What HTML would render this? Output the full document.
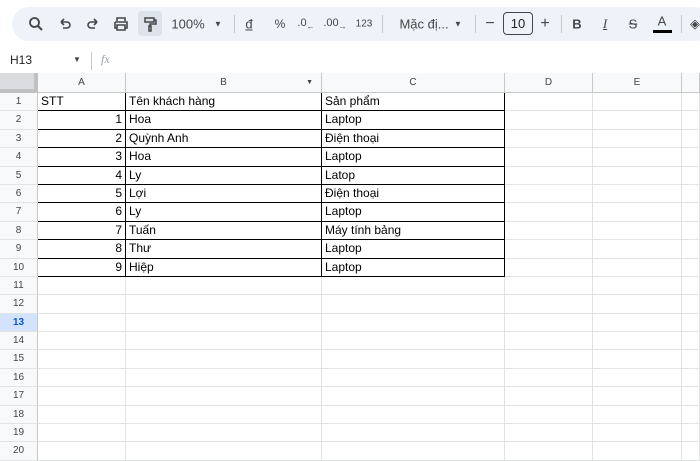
<!DOCTYPE html>
<html><head><meta charset="utf-8"><style>
*{box-sizing:border-box;margin:0;padding:0}
body{width:700px;height:454px;overflow:hidden;background:#fff;font-family:"Liberation Sans",Arial,sans-serif;position:relative;color:#000}
.tb{position:absolute;left:12px;top:7px;width:700px;height:34px;background:#eef2f9;border-radius:17px}
.i{position:absolute;top:24px;transform:translate(-50%,-50%);font-size:13px;color:#444746;white-space:nowrap}
.sep{position:absolute;top:15px;width:1px;height:18px;background:#c7c7c7}
.fb{position:absolute;top:50px;left:0;width:700px;height:22px}
.hdr{position:absolute;top:73px;left:0;height:20px;display:flex;width:700px;background:#f8f9fa}
.hdr div{border-right:1px solid #c7c7c7;border-bottom:1px solid #c7c7c7;font-size:10px;color:#444;text-align:center;line-height:19px;position:relative}
.g{position:absolute;top:93px;left:0;width:700px}
.r{display:flex;height:18.4px}
.r div{border-right:1px solid #e2e3e3;border-bottom:1px solid #e2e3e3;font-size:12px;line-height:17px;padding:0 3px;white-space:nowrap;overflow:hidden}
.r div:first-child{background:#f8f9fa;border-right:1px solid #c7c7c7;font-size:10px;color:#444;text-align:center;padding:0}
.r.d div:nth-child(2),.r.d div:nth-child(3),.r.d div:nth-child(4){border-bottom:1px solid #000}
.r.d div:nth-child(2),.r.d div:nth-child(3),.r.d div:nth-child(4){border-right:1px solid #000}
.n{text-align:right}
.c0{width:38px}.c1{width:88px}.c2{width:196px}.c3{width:183px}.c4{width:88px}.c5{width:89px}.c6{width:18px}
</style></head><body>
<div class="tb"></div>
<svg style="position:absolute;left:28px;top:16px" width="16" height="16" viewBox="0 0 16 16"><circle cx="6.5" cy="6.5" r="4.5" fill="none" stroke="#444746" stroke-width="1.8"/><path d="M10 10l4 4" stroke="#444746" stroke-width="2"/></svg>
<svg style="position:absolute;left:58px;top:17px" width="14" height="14" viewBox="0 0 14 14"><path d="M3 5h6a3 3 0 010 6H5M3 5l3-3M3 5l3 3" fill="none" stroke="#444746" stroke-width="1.6"/></svg>
<svg style="position:absolute;left:86px;top:17px" width="14" height="14" viewBox="0 0 14 14"><path d="M11 5H5a3 3 0 000 6h4M11 5L8 2M11 5L8 8" fill="none" stroke="#444746" stroke-width="1.6"/></svg>
<svg style="position:absolute;left:113px;top:16px" width="16" height="16" viewBox="0 0 16 16"><path d="M4 5V2h8v3M2 6h12v6h-2M4 12H2V6M4 9h8v5H4z" fill="none" stroke="#444746" stroke-width="1.6"/></svg>
<div style="position:absolute;left:138px;top:11px;width:24px;height:25px;background:#dde3ea;border-radius:4px"></div>
<svg style="position:absolute;left:143px;top:16px" width="14" height="16" viewBox="0 0 14 16"><path d="M2 2h9v4H2zM11 4h2v4H7v2M6 10h2v5H6z" fill="none" stroke="#444746" stroke-width="1.5"/></svg>
<div class="i" style="left:188px;font-size:13px">100%</div>
<div class="i" style="left:218px;font-size:8px">▼</div>
<div class="sep" style="left:234px"></div>
<div class="i" style="left:249px;text-decoration:underline">đ</div>
<div class="i" style="left:280px;font-size:12px">%</div>
<div class="i" style="left:306px;font-size:11px">.0<sub style="font-size:8px">←</sub></div>
<div class="i" style="left:335px;font-size:11px">.00<sub style="font-size:8px">→</sub></div>
<div class="i" style="left:364px;font-size:10px">123</div>
<div class="sep" style="left:382px"></div>
<div class="i" style="left:424px;font-size:13px">Mặc đị...</div>
<div class="i" style="left:458px;font-size:8px">▼</div>
<div class="sep" style="left:475px"></div>
<div class="i" style="left:490px;font-size:16px">−</div>
<div style="position:absolute;left:503px;top:12px;width:30px;height:23px;border:1px solid #444746;border-radius:4px;font-size:13px;text-align:center;line-height:21px;color:#222">10</div>
<div class="i" style="left:545px;font-size:16px">+</div>
<div class="sep" style="left:561px"></div>
<div class="i" style="left:577px;font-weight:bold">B</div>
<div class="i" style="left:605px;font-style:italic;font-family:'Liberation Serif',serif;text-decoration:underline">I</div>
<div class="i" style="left:633px;text-decoration:line-through">S</div>
<div class="i" style="left:662px;top:21px">A</div>
<div style="position:absolute;left:653px;top:30px;width:19px;height:3px;background:#000"></div>
<div class="sep" style="left:681px"></div>
<div class="i" style="left:695px">◈</div>
<div style="position:absolute;left:10px;top:53px;font-size:12px;color:#222">H13</div>
<div style="position:absolute;left:73px;top:55px;font-size:8px;color:#444">▼</div>
<div style="position:absolute;left:91px;top:52px;width:1px;height:18px;background:#c7c7c7"></div>
<div style="position:absolute;left:101px;top:52px;font-size:12px;font-style:italic;font-family:'Liberation Serif',serif;color:#9aa0a6">fx</div>
<div class="hdr"><div class="c0" style="background:#dadce0;border-right:4px solid #c0c0c0;border-bottom:4px solid #c0c0c0"></div><div class="c1">A</div><div class="c2">B<span style="position:absolute;right:8px;font-size:7px">▼</span></div><div class="c3">C</div><div class="c4">D</div><div class="c5">E</div><div class="c6"></div></div>
<div class="g">
<div class="r d"><div class="c0">1</div><div class="c1">STT</div><div class="c2">Tên khách hàng</div><div class="c3">Sản phẩm</div><div class="c4"></div><div class="c5"></div><div class="c6"></div></div>
<div class="r d"><div class="c0">2</div><div class="c1 n">1</div><div class="c2">Hoa</div><div class="c3">Laptop</div><div class="c4"></div><div class="c5"></div><div class="c6"></div></div>
<div class="r d"><div class="c0">3</div><div class="c1 n">2</div><div class="c2">Quỳnh Anh</div><div class="c3">Điện thoại</div><div class="c4"></div><div class="c5"></div><div class="c6"></div></div>
<div class="r d"><div class="c0">4</div><div class="c1 n">3</div><div class="c2">Hoa</div><div class="c3">Laptop</div><div class="c4"></div><div class="c5"></div><div class="c6"></div></div>
<div class="r d"><div class="c0">5</div><div class="c1 n">4</div><div class="c2">Ly</div><div class="c3">Latop</div><div class="c4"></div><div class="c5"></div><div class="c6"></div></div>
<div class="r d"><div class="c0">6</div><div class="c1 n">5</div><div class="c2">Lợi</div><div class="c3">Điện thoại</div><div class="c4"></div><div class="c5"></div><div class="c6"></div></div>
<div class="r d"><div class="c0">7</div><div class="c1 n">6</div><div class="c2">Ly</div><div class="c3">Laptop</div><div class="c4"></div><div class="c5"></div><div class="c6"></div></div>
<div class="r d"><div class="c0">8</div><div class="c1 n">7</div><div class="c2">Tuấn</div><div class="c3">Máy tính bảng</div><div class="c4"></div><div class="c5"></div><div class="c6"></div></div>
<div class="r d"><div class="c0">9</div><div class="c1 n">8</div><div class="c2">Thư</div><div class="c3">Laptop</div><div class="c4"></div><div class="c5"></div><div class="c6"></div></div>
<div class="r d"><div class="c0">10</div><div class="c1 n">9</div><div class="c2">Hiệp</div><div class="c3">Laptop</div><div class="c4"></div><div class="c5"></div><div class="c6"></div></div>
<div class="r"><div class="c0">11</div><div class="c1"></div><div class="c2"></div><div class="c3"></div><div class="c4"></div><div class="c5"></div><div class="c6"></div></div>
<div class="r"><div class="c0">12</div><div class="c1"></div><div class="c2"></div><div class="c3"></div><div class="c4"></div><div class="c5"></div><div class="c6"></div></div>
<div class="r"><div class="c0" style="background:#d3e3fd;font-weight:bold;color:#0b57d0">13</div><div class="c1"></div><div class="c2"></div><div class="c3"></div><div class="c4"></div><div class="c5"></div><div class="c6"></div></div>
<div class="r"><div class="c0">14</div><div class="c1"></div><div class="c2"></div><div class="c3"></div><div class="c4"></div><div class="c5"></div><div class="c6"></div></div>
<div class="r"><div class="c0">15</div><div class="c1"></div><div class="c2"></div><div class="c3"></div><div class="c4"></div><div class="c5"></div><div class="c6"></div></div>
<div class="r"><div class="c0">16</div><div class="c1"></div><div class="c2"></div><div class="c3"></div><div class="c4"></div><div class="c5"></div><div class="c6"></div></div>
<div class="r"><div class="c0">17</div><div class="c1"></div><div class="c2"></div><div class="c3"></div><div class="c4"></div><div class="c5"></div><div class="c6"></div></div>
<div class="r"><div class="c0">18</div><div class="c1"></div><div class="c2"></div><div class="c3"></div><div class="c4"></div><div class="c5"></div><div class="c6"></div></div>
<div class="r"><div class="c0">19</div><div class="c1"></div><div class="c2"></div><div class="c3"></div><div class="c4"></div><div class="c5"></div><div class="c6"></div></div>
<div class="r"><div class="c0">20</div><div class="c1"></div><div class="c2"></div><div class="c3"></div><div class="c4"></div><div class="c5"></div><div class="c6"></div></div>
</div>
</body></html>
